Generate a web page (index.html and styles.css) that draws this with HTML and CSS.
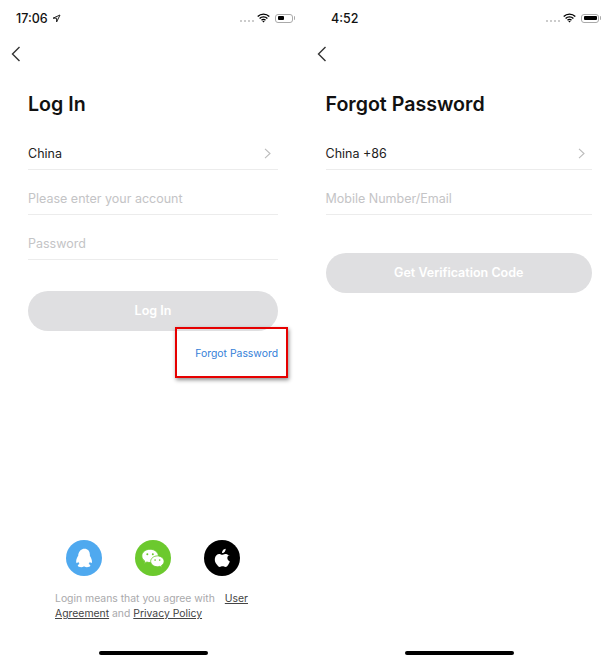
FILE: index.html
```html
<!DOCTYPE html>
<html lang="en">
<head>
    <meta charset="UTF-8">
    <meta name="viewport" content="width=device-width, initial-scale=1.0">
    <title>Log In / Forgot Password</title>
    <link rel="stylesheet" href="styles.css">
</head>
<body>
    <div class="screens">
        <section class="phone phone-login">
            <div class="status-bar">
                <span class="time">17:06</span>
                <svg class="location" width="9" height="9" viewBox="0 0 9 9"><path d="M8 1 1 4.200h3.600V8z" fill="none" stroke="#222" stroke-width="1"/></svg>
                <span class="status-right">
                    <span class="signal"><i></i><i></i><i></i><i></i></span>
                    <svg class="wifi" width="13" height="10" viewBox="0 0 15 11"><path d="M.8 3.800a9.600 9.600 0 0 1 13.400 0M3 6a6.400 6.400 0 0 1 9 0M5.200 8.100a3.200 3.200 0 0 1 4.600 0" fill="none" stroke="#000" stroke-width="1.600"/><path d="M7.500 10.800 6.100 9.300a2 2 0 0 1 2.800 0z"/></svg>
                    <span class="battery"><span class="battery-level level-low"></span></span>
                </span>
            </div>
            <svg class="back" width="10" height="16" viewBox="0 0 10 16"><path d="M8.500 1 1.500 8l7 7" fill="none" stroke="#333" stroke-width="1.400"/></svg>
            <div class="content">
                <h1>Log In</h1>
                <div class="row first-row">
                    <span class="row-value">China</span>
                    <svg class="chevron" width="7" height="11" viewBox="0 0 7 11"><path d="M1 .8 6 5.500 1 10.200" fill="none" stroke="#bbb" stroke-width="1.100"/></svg>
                </div>
                <div class="row"><span class="placeholder">Please enter your account</span></div>
                <div class="row"><span class="placeholder">Password</span></div>
                <button class="submit login-submit" type="button">Log In</button>
                <a class="forgot" href="#">Forgot Password</a>
            </div>
            <div class="highlight"></div>
            <div class="social">
                <span class="social-btn qq">
                    <svg width="17" height="20" viewBox="0 0 20 23"><path fill="#fff" d="M10 .5c3.900 0 6.200 2.900 6.300 6.500l.1 2c1 1.400 2.400 4 2.400 6.700 0 1.500-.6 2-1.100 1.800-.5-.2-1-.9-1.400-1.600-.2 1.100-.8 2.100-1.500 2.800 1.200.4 2.100 1.100 2.100 2 0 .9-1.900 1.600-4.200 1.600-1.100 0-2-.3-2.700-.7-.3 0-.700 0-1 0-.7.400-1.600.7-2.700.7-2.300 0-4.200-.7-4.200-1.600 0-.9.900-1.600 2.100-2-.7-.7-1.300-1.700-1.500-2.800-.4.700-.9 1.400-1.400 1.600-.5.200-1.100-.3-1.100-1.800 0-2.700 1.400-5.300 2.400-6.700l.1-2C3.800 3.400 6.100.5 10 .5z"/></svg>
                </span>
                <span class="social-btn wechat">
                    <svg width="24" height="20" viewBox="0 0 28 24"><path fill="#fff" stroke="#6cc92e" stroke-width="1" d="M10.500 1.500C5 1.500.6 5.100.6 9.500c0 2.500 1.400 4.700 3.600 6.200l-.8 2.800 3.200-1.700c1.200.4 2.500.6 3.900.6 5.500 0 9.900-3.600 9.900-7.900s-4.400-8-9.900-8z"/><circle cx="7.200" cy="7.500" r="1.200" fill="#6cc92e"/><circle cx="13.800" cy="7.500" r="1.200" fill="#6cc92e"/><path fill="#fff" stroke="#6cc92e" stroke-width="1" d="M19.300 9.500c-4.500 0-8.100 3-8.100 6.500s3.600 6.500 8.100 6.500c1 0 2-.2 2.900-.5l2.600 1.400-.7-2.300c1.900-1.200 3.200-3 3.200-5.100 0-3.500-3.500-6.500-8-6.500z"/><circle cx="16.500" cy="14.500" r="1" fill="#6cc92e"/><circle cx="22" cy="14.500" r="1" fill="#6cc92e"/></svg>
                </span>
                <span class="social-btn apple">
                    <svg width="17" height="20" viewBox="0 0 20 24"><path fill="#fff" d="M13.800 1c.1 1.300-.4 2.500-1.100 3.400-.8.900-2 1.600-3.200 1.500-.2-1.200.4-2.500 1.100-3.300C11.400 1.700 12.700 1.100 13.800 1zM18 8.300c-1.400.9-2.200 2.200-2.200 3.800 0 1.900 1.100 3.300 3 4.100-.5 1.500-1.200 2.900-2.100 4.200-.9 1.200-1.800 2.400-3.200 2.400s-1.800-.8-3.400-.8-2.100.8-3.400.8c-1.400 0-2.400-1.300-3.300-2.600C1.300 17.800.4 14.900.9 12.200c.5-2.900 2.700-4.900 5.200-4.900 1.400 0 2.500.9 3.400.9s2.100-1 3.700-1c1.900 0 3.600.7 4.800 2.100z"/></svg>
                </span>
            </div>
            <div class="terms">
                <p>Login means that you agree with <a class="terms-user" href="#">User</a></p>
                <p><a href="#">Agreement</a> and <a href="#">Privacy Policy</a></p>
            </div>
            <div class="home-bar"></div>
        </section>

        <section class="phone phone-forgot">
            <div class="status-bar">
                <span class="time time-forgot">4:52</span>
                <span class="status-right">
                    <span class="signal"><i></i><i></i><i></i><i></i></span>
                    <svg class="wifi" width="13" height="10" viewBox="0 0 15 11"><path d="M.8 3.800a9.600 9.600 0 0 1 13.400 0M3 6a6.400 6.400 0 0 1 9 0M5.200 8.100a3.200 3.200 0 0 1 4.600 0" fill="none" stroke="#000" stroke-width="1.600"/><path d="M7.500 10.800 6.100 9.300a2 2 0 0 1 2.800 0z"/></svg>
                    <span class="battery"><span class="battery-level level-full"></span></span>
                </span>
            </div>
            <svg class="back" width="10" height="16" viewBox="0 0 10 16"><path d="M8.500 1 1.500 8l7 7" fill="none" stroke="#333" stroke-width="1.400"/></svg>
            <div class="content">
                <h1>Forgot Password</h1>
                <div class="row first-row">
                    <span class="row-value">China +86</span>
                    <svg class="chevron" width="7" height="11" viewBox="0 0 7 11"><path d="M1 .8 6 5.500 1 10.200" fill="none" stroke="#bbb" stroke-width="1.100"/></svg>
                </div>
                <div class="row"><span class="placeholder">Mobile Number/Email</span></div>
                <button class="submit forgot-submit" type="button">Get Verification Code</button>
            </div>
            <div class="home-bar"></div>
        </section>
    </div>
</body>
</html>
```

FILE: styles.css
```css
body {
    margin: 0;
    background-color: #fff;
    font-family: Inter, "Liberation Sans", sans-serif;
    color: #111;
}
.screens {
    display: flex;
    width: 612px;
    height: 662px;
    overflow: hidden;
}
.phone {
    position: relative;
    display: flex;
    flex-direction: column;
    width: 306px;
    height: 662px;
}
.status-bar {
    display: flex;
    align-items: center;
    height: 14px;
    margin-top: 11px;
    padding: 0 13px 0 16px;
}
.time {
    font-size: 12.500px;
    font-weight: 500;
    color: #111;
}
.time-forgot {
    margin-left: 9px;
}
.location {
    margin-left: 4px;
}
.status-right {
    display: flex;
    align-items: center;
    margin-left: auto;
}
.signal {
    display: flex;
    gap: 2px;
    margin-top: 6px;
    margin-right: 3px;
}
.signal i {
    width: 2px;
    height: 2px;
    border-radius: 50%;
    background-color: #bbb;
}
.battery {
    position: relative;
    display: flex;
    box-sizing: border-box;
    width: 18px;
    height: 9px;
    margin-left: 5px;
    padding: 1.500px;
    border: 1px solid #aaa;
    border-radius: 3px;
}
.battery::after {
    content: "";
    position: absolute;
    right: -3px;
    top: 1.500px;
    width: 1.500px;
    height: 4px;
    border-radius: 0 1px 1px 0;
    background-color: #aaa;
}
.battery-level {
    display: block;
    height: 100%;
    border-radius: 1px;
    background-color: #000;
}
.level-low {
    width: 6px;
}
.level-full {
    width: 100%;
}
.back {
    display: block;
    margin: 21px 0 0 11px;
}
.content {
    display: flex;
    flex-direction: column;
    padding: 0 28px;
}
.phone-forgot .content {
    padding: 0 20px 0 19.500px;
}
h1 {
    margin: 29px 0 0;
    font-size: 19.600px;
    line-height: 26px;
    font-weight: 600;
    color: #111;
}
.row {
    display: flex;
    align-items: flex-end;
    justify-content: space-between;
    box-sizing: border-box;
    height: 45px;
    padding: 0 7px 8px 0;
    border-bottom: 1px solid #ececec;
    font-size: 12.500px;
}
.first-row {
    margin-top: 9px;
    height: 44px;
}
.chevron {
    margin-bottom: 2px;
}
.row-value {
    color: #222;
}
.placeholder {
    color: #c4c4c6;
}
.submit {
    height: 39.500px;
    padding: 0;
    border: none;
    border-radius: 20px;
    background-color: #dfdfe1;
    color: #fff;
    font-family: inherit;
    font-size: 12.500px;
    font-weight: 600;
}
.login-submit {
    margin-top: 31px;
}
.forgot-submit {
    margin-top: 38px;
}
.forgot {
    align-self: flex-end;
    margin-top: 16px;
    font-size: 10.400px;
    color: #3580d8;
    text-decoration: none;
}
.highlight {
    position: absolute;
    left: 175px;
    top: 327px;
    box-sizing: border-box;
    width: 113px;
    height: 51px;
    border: 2px solid #e60000;
    box-shadow: 1px 2px 4px rgba(0, 0, 0, 0.45);
}
.social {
    position: absolute;
    left: 66px;
    top: 540px;
    display: flex;
    gap: 33px;
}
.social-btn {
    display: flex;
    align-items: center;
    justify-content: center;
    width: 36px;
    height: 36px;
    border-radius: 50%;
}
.qq {
    background-color: #4fa9ef;
}
.wechat {
    background-color: #6cc92e;
}
.apple {
    background-color: #000;
}
.terms {
    position: absolute;
    left: 55px;
    top: 591px;
    font-size: 10.400px;
    line-height: 15px;
    color: #a9a9ab;
}
.terms p {
    margin: 0;
}
.terms a {
    color: #444;
}
.terms-user {
    margin-left: 7px;
}
.home-bar {
    position: absolute;
    left: 99px;
    top: 651px;
    width: 109px;
    height: 4px;
    border-radius: 2px;
    background-color: #000;
}
```
